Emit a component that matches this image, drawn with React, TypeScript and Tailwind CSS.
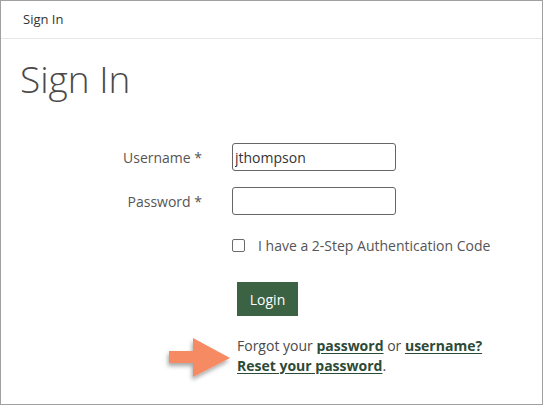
const font = { fontFamily: '"Open Sans", "Liberation Sans", sans-serif' };

export default function App() {
  return (
    <div
      style={font}
      className="relative w-[543px] h-[405px] border border-[#a0a0a0] bg-white text-[#4d4d4d] overflow-hidden"
    >
      {/* breadcrumb header */}
      <div className="h-[38px] border-b border-[#e6e6e6] flex items-center pl-[22px] text-[13px] text-[#333]">
        Sign In
      </div>

      <h1 className="mt-[17px] pl-[19px] text-[37px] leading-[45px] font-light text-[#4a4a4a]">Sign In</h1>

      <div className="mt-[42px] flex flex-col">
        <div className="flex items-center">
          <label className="w-[201px] text-right text-[14px] text-[#555]">Username *</label>
          <input
            defaultValue="jthompson"
            className="ml-[30px] w-[164px] h-[28px] border border-[#666] rounded-[3px] px-[2px] text-[14px] text-[#333] outline-none"
            style={font}
          />
        </div>
        <div className="mt-[16px] flex items-center">
          <label className="w-[201px] text-right text-[14px] text-[#555]">Password *</label>
          <input
            type="password"
            className="ml-[30px] w-[164px] h-[28px] border border-[#666] rounded-[3px] px-[2px] text-[14px] outline-none"
          />
        </div>
        <div className="mt-[23px] ml-[231px] flex items-center h-[14px]">
          <span className="w-[13px] h-[13px] border border-[#6b6b6b] rounded-[2px] bg-white" />
          <span className="ml-[13px] text-[14px] text-[#555]">I have a 2-Step Authentication Code</span>
        </div>
        <div className="mt-[30px] ml-[236px]">
          <button className="w-[61px] h-[34px] bg-[#3a6243] text-white text-[14px]" style={font}>
            Login
          </button>
        </div>
        <div className="mt-[20px] ml-[236px] text-[14px] leading-[20px] text-[#4a4a4a]">
          <div>
            Forgot your{" "}
            <a className="font-bold text-[#2d4a36] underline underline-offset-2">password</a> or{" "}
            <a className="font-bold text-[#2d4a36] underline underline-offset-2">username?</a>
          </div>
          <div>
            <a className="font-bold text-[#2d4a36] underline underline-offset-2">Reset your password</a>.
          </div>
        </div>
      </div>

      {/* callout arrow */}
      <svg
        className="absolute left-[162px] top-[332px]"
        width="76"
        height="52"
        viewBox="0 0 76 52"
      >
        <defs>
          <filter id="sh" x="-20%" y="-20%" width="140%" height="150%">
            <feDropShadow dx="-1" dy="3" stdDeviation="2" floodColor="#000" floodOpacity="0.35" />
          </filter>
        </defs>
        <path
          d="M6 18 H30 V5 L67 25 L30 44 V30 H6 Z"
          fill="#f68a62"
          filter="url(#sh)"
        />
      </svg>
    </div>
  );
}
